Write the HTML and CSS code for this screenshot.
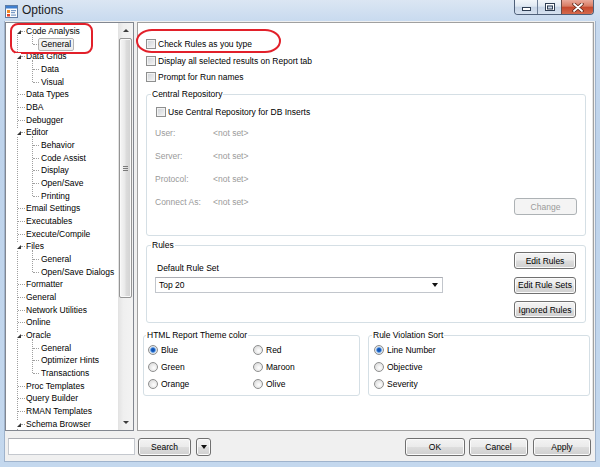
FILE: index.html
```html
<!DOCTYPE html>
<html>
<head>
<meta charset="utf-8">
<title>Options</title>
<link rel="stylesheet" href="styles.css">
</head>
<body>
<div class="window">
  <div class="titlebar">
    <svg class="appicon" width="13" height="13" viewBox="0 0 13 13">
      <rect x="0.5" y="0.5" width="12" height="12" fill="#fdfdfd" stroke="#5f7da5"/>
      <rect x="1" y="1" width="11" height="2.5" fill="#3f7fcf"/>
      <rect x="2" y="5" width="3" height="3" fill="#f08a24"/>
      <rect x="6" y="5" width="5" height="1.2" fill="#7a9cc8"/>
      <rect x="6" y="7" width="4" height="1.2" fill="#7a9cc8"/>
      <rect x="2" y="9" width="3" height="2.5" fill="#e0442a"/>
      <rect x="6" y="9.5" width="5" height="1.2" fill="#7a9cc8"/>
    </svg>
    <span class="title">Options</span>
    <div class="controls">
      <div class="cbtn min"><svg width="9" height="4" viewBox="0 0 9 4"><rect x="0.5" y="0.5" width="8" height="3" fill="#fff" stroke="#2e3d52"/></svg></div>
      <div class="cbtn max"><svg width="10" height="8" viewBox="0 0 10 8"><rect x="0.5" y="0.5" width="9" height="7" fill="none" stroke="#2e3d52"/><rect x="1.5" y="1.5" width="7" height="5" fill="none" stroke="#fff"/><rect x="2.5" y="3" width="5" height="3" fill="none" stroke="#2e3d52"/></svg></div>
      <div class="cbtn close"><svg width="12" height="9" viewBox="0 0 12 9"><path d="M2 1 L10 8 M10 1 L2 8" stroke="#5a2418" stroke-width="3.4" stroke-linecap="round"/><path d="M2 1 L10 8 M10 1 L2 8" stroke="#fff" stroke-width="1.8" stroke-linecap="round"/></svg></div>
    </div>
  </div>

  <div class="client">
    <div class="main">
      <div class="treepane">
        <div class="tree">
          <div class="row exp"><i class="tw"></i>Code Analysis</div>
          <div class="kids"><div class="row"><span class="sel">General</span></div></div>
          <div class="row exp"><i class="tw"></i>Data Grids</div>
          <div class="kids"><div class="row">Data</div><div class="row">Visual</div></div>
          <div class="row">Data Types</div>
          <div class="row">DBA</div>
          <div class="row">Debugger</div>
          <div class="row exp"><i class="tw"></i>Editor</div>
          <div class="kids"><div class="row">Behavior</div><div class="row">Code Assist</div><div class="row">Display</div><div class="row">Open/Save</div><div class="row">Printing</div></div>
          <div class="row">Email Settings</div>
          <div class="row">Executables</div>
          <div class="row">Execute/Compile</div>
          <div class="row exp"><i class="tw"></i>Files</div>
          <div class="kids"><div class="row">General</div><div class="row">Open/Save Dialogs</div></div>
          <div class="row">Formatter</div>
          <div class="row">General</div>
          <div class="row">Network Utilities</div>
          <div class="row">Online</div>
          <div class="row exp"><i class="tw"></i>Oracle</div>
          <div class="kids"><div class="row">General</div><div class="row">Optimizer Hints</div><div class="row">Transactions</div></div>
          <div class="row">Proc Templates</div>
          <div class="row">Query Builder</div>
          <div class="row">RMAN Templates</div>
          <div class="row exp"><i class="tw"></i>Schema Browser</div>
        </div>
        <div class="vscroll">
          <div class="sbtn up"><i></i></div>
          <div class="track"><div class="thumb"><i class="grip"></i></div></div>
          <div class="sbtn down"><i></i></div>
        </div>
      </div>

      <div class="content">
        <div class="chk-row"><span class="cb"></span>Check Rules as you type</div>
        <div class="chk-row"><span class="cb"></span>Display all selected results on Report tab</div>
        <div class="chk-row"><span class="cb"></span>Prompt for Run names</div>

        <div class="group central">
          <div class="legend">Central Repository</div>
          <div class="chk-row inner"><span class="cb"></span>Use Central Repository for DB Inserts</div>
          <div class="fields">
            <div class="field"><span class="lbl">User:</span><span>&lt;not set&gt;</span></div>
            <div class="field"><span class="lbl">Server:</span><span>&lt;not set&gt;</span></div>
            <div class="field"><span class="lbl">Protocol:</span><span>&lt;not set&gt;</span></div>
            <div class="field"><span class="lbl">Connect As:</span><span>&lt;not set&gt;</span><span class="btn btn-change disabled">Change</span></div>
          </div>
        </div>

        <div class="group rules">
          <div class="legend">Rules</div>
          <div class="rules-body">
            <div class="rules-left">
              <div class="rs-label">Default Rule Set</div>
              <div class="combo"><span>Top 20</span><i class="caret"></i></div>
            </div>
            <div class="rules-right">
              <span class="btn btn-rule">Edit Rules</span>
              <span class="btn btn-rule">Edit Rule Sets</span>
              <span class="btn btn-rule">Ignored Rules</span>
            </div>
          </div>
        </div>

        <div class="bottom-groups">
          <div class="group theme">
            <div class="legend">HTML Report Theme color</div>
            <div class="radios two">
              <div class="rd-row"><span class="rd on"></span>Blue</div>
              <div class="rd-row"><span class="rd"></span>Red</div>
              <div class="rd-row"><span class="rd"></span>Green</div>
              <div class="rd-row"><span class="rd"></span>Maroon</div>
              <div class="rd-row"><span class="rd"></span>Orange</div>
              <div class="rd-row"><span class="rd"></span>Olive</div>
            </div>
          </div>
          <div class="group sort">
            <div class="legend">Rule Violation Sort</div>
            <div class="radios one">
              <div class="rd-row"><span class="rd on"></span>Line Number</div>
              <div class="rd-row"><span class="rd"></span>Objective</div>
              <div class="rd-row"><span class="rd"></span>Severity</div>
            </div>
          </div>
        </div>
      </div>
    </div>

    <div class="bottombar">
      <div class="search"></div>
      <span class="btn btn-search">Search</span>
      <span class="btn btn-drop"><i class="caret"></i></span>
      <span class="btn btn-ok">OK</span>
      <span class="btn btn-cancel">Cancel</span>
      <span class="btn btn-apply">Apply</span>
    </div>
  </div>

  <div class="mark mark1"></div>
  <div class="mark mark2"></div>
</div>
</body>
</html>
```
FILE: styles.css
```css
* { box-sizing: border-box; }

body {
  margin: 0;
  font-family: "Liberation Sans", Arial, sans-serif;
  font-size: 8.5px;
  color: #000;
}

.window {
  position: relative;
  width: 600px;
  height: 467px;
  overflow: hidden;
  display: flex;
  flex-direction: column;
  background: linear-gradient(180deg, #dbe6f3 0px, #c8daef 21px, #bed3eb 140px, #c4d8ee 467px);
}

/* title bar */
.titlebar {
  height: 21px;
  flex: none;
  display: flex;
  align-items: flex-start;
}
.appicon { margin: 5px 0 0 5px; flex: none; }
.title {
  margin: 3px 0 0 4px;
  font-size: 12px;
  line-height: 15px;
  color: #1b1b1b;
}
.controls {
  margin-left: auto;
  margin-right: 6px;
  display: flex;
  height: 15px;
  border: 1px solid #4f6079;
  border-top: none;
  border-radius: 0 0 4px 4px;
  overflow: hidden;
}
.cbtn {
  height: 100%;
  display: flex;
  align-items: center;
  justify-content: center;
}
.min, .max {
  background: linear-gradient(#f2f6fa 0%, #dfe8f2 45%, #c6d4e6 50%, #d6e1ef 100%);
}
.min { width: 22px; }
.min svg { margin-top: 4px; }
.max { width: 24px; border-left: 1px solid #6c7d95; }
.close {
  width: 32px;
  border-left: 1px solid #6c4a45;
  background: linear-gradient(#eaa99a 0%, #d87b63 45%, #c5472d 50%, #d4694c 100%);
}

/* client */
.client {
  flex: 1;
  margin: 0 4px 5px 4px;
  background: #f0f0f0;
  border: 1px solid #9fb3cc;
  border-top: none;
  display: flex;
  flex-direction: column;
}
.main {
  flex: none;
  height: 410px;
  padding-top: 1px;
  display: flex;
}

/* tree */
.treepane {
  width: 129px;
  height: 409px;
  border: 1px solid #828790;
  background: #fff;
  display: flex;
  overflow: hidden;
}
.tree {
  position: relative;
  flex: 1;
  padding-top: 2px;
  overflow: hidden;
}
.tree::before {
  content: "";
  position: absolute;
  left: 11px;
  top: 8px;
  bottom: 0;
  border-left: 1px dotted #a0a0a0;
}
.row {
  position: relative;
  height: 12.68px;
  line-height: 12.68px;
  padding-left: 20px;
  white-space: nowrap;
}
.row::after {
  content: "";
  position: absolute;
  left: 12px;
  width: 7px;
  top: 6px;
  border-top: 1px dotted #a0a0a0;
}
.row.exp::after { left: 15px; width: 4px; }
.tw {
  position: absolute;
  left: 9px;
  top: 3px;
  width: 6px;
  height: 7px;
  background: #fff;
  z-index: 1;
}
.tw::after {
  content: "";
  position: absolute;
  right: 0;
  bottom: 1px;
  border-left: 4px solid transparent;
  border-bottom: 4px solid #333;
}
.kids { position: relative; }
.kids::before {
  content: "";
  position: absolute;
  left: 26px;
  top: -3px;
  bottom: 6.5px;
  border-left: 1px dotted #a0a0a0;
}
.kids .row { padding-left: 35px; }
.kids .row::after { left: 27px; width: 6px; }
.sel {
  display: inline-block;
  vertical-align: top;
  margin-top: 0.5px;
  margin-left: -3px;
  height: 12.5px;
  line-height: 10.5px;
  padding: 0 2px;
  border: 1px solid #b4b4b4;
  border-radius: 2px;
  background: linear-gradient(#f7f7f7, #ececec);
}

/* scrollbar */
.vscroll {
  width: 15px;
  flex: none;
  display: flex;
  flex-direction: column;
  background: linear-gradient(90deg, #e2e2e2, #efefef 35%, #f3f3f3);
}
.sbtn {
  height: 15px;
  flex: none;
  display: flex;
  align-items: center;
  justify-content: center;
}
.sbtn i { width: 0; height: 0; border-left: 3px solid transparent; border-right: 3px solid transparent; }
.sbtn.up i { border-bottom: 3px solid #3c3c3c; }
.sbtn.down i { border-top: 3px solid #3c3c3c; }
.track { flex: 1; padding: 0 1px; }
.thumb {
  height: 260px;
  border: 1px solid #959595;
  border-radius: 2px;
  background: linear-gradient(90deg, #f6f6f6, #e9e9e9 45%, #dcdcdc 55%, #d2d2d2);
  box-shadow: inset 0 0 0 1px #f9f9f9;
  display: flex;
  align-items: center;
  justify-content: center;
}
.grip {
  width: 5px;
  height: 5px;
  background: repeating-linear-gradient(#7a7a7a 0 1px, transparent 1px 2px);
}

/* right content */
.content {
  width: 457px;
  height: 409px;
  margin-left: 3px;
  border: 1px solid #a0a0a0;
  box-shadow: inset -1px 0 #e6e6e6;
  background: #fff;
  padding-top: 13px;
  display: flex;
  flex-direction: column;
}
.chk-row {
  height: 16.5px;
  margin-left: 8px;
  display: flex;
  align-items: center;
  white-space: nowrap;
}
.cb {
  width: 10px;
  height: 10px;
  flex: none;
  margin-right: 2px;
  border: 1px solid #8e8f8f;
  background: linear-gradient(135deg, #cdd1d6, #f6f6f6);
  box-shadow: inset 0 0 0 1px #f2f2f2;
}

.group {
  border: 1px solid #d5dfe5;
  border-radius: 3px;
  display: flex;
  flex-direction: column;
}
.legend {
  align-self: flex-start;
  height: 12px;
  line-height: 12px;
  margin: -7px 0 0 4px;
  padding: 0 1px;
  background: #fff;
  white-space: nowrap;
}

.central {
  height: 142px;
  margin: 8.5px 7px 0 8px;
}
.chk-row.inner { height: 16px; margin: 4px 0 0 9px; }
.fields { margin-top: 1.5px; }
.field {
  height: 23px;
  display: flex;
  align-items: center;
  padding-left: 8px;
  color: #9a9a9a;
}
.lbl { width: 58px; flex: none; }

.btn {
  display: flex;
  align-items: center;
  justify-content: center;
  height: 17px;
  border: 1px solid #707070;
  border-radius: 3px;
  background: linear-gradient(#f3f3f3 0%, #ebebeb 48%, #dddddd 52%, #cfcfcf 100%);
  box-shadow: inset 0 0 0 1px #fbfbfb;
  color: #000;
  white-space: nowrap;
  flex: none;
}
.btn.disabled {
  border-color: #adb2b5;
  background: #f4f4f4;
  box-shadow: none;
  color: #9a9a9a;
}
.btn-change {
  width: 63px;
  margin-left: auto;
  margin-right: 8px;
  align-self: flex-start;
  margin-top: 7.5px;
}

.rules {
  height: 78px;
  margin: 9px 7px 0 8px;
}
.rules-body { flex: 1; display: flex; }
.rules-left { flex: 1; padding-left: 8px; }
.rs-label { margin-top: 11px; height: 12px; line-height: 12px; padding-left: 2px; }
.combo {
  margin-top: 3px;
  width: 288px;
  height: 16px;
  border: 1px solid #c2c6cc;
  border-top-color: #abadb3;
  background: #fff;
  display: flex;
  align-items: center;
  padding: 0 4px 0 3px;
}
.combo span { flex: 1; }
.caret {
  width: 0;
  height: 0;
  border-left: 3.5px solid transparent;
  border-right: 3.5px solid transparent;
  border-top: 4px solid #111;
}
.rules-right {
  display: flex;
  flex-direction: column;
  gap: 7.5px;
  padding-top: 1px;
  margin-right: 9px;
}
.btn-rule { width: 62px; }

.bottom-groups {
  display: flex;
  gap: 8px;
  margin: 12px 3px 0 5px;
}
.theme { width: 217px; height: 61px; }
.sort { flex: 1; height: 61px; }
.theme .legend { margin-left: 2px; }
.sort .legend { margin-left: 3px; }
.radios { padding-top: 0.5px; display: grid; grid-auto-rows: 17px; }
.radios.two { grid-template-columns: 105px auto; padding-left: 4px; }
.radios.one { padding-left: 5px; }
.rd-row { display: flex; align-items: center; white-space: nowrap; }
.rd {
  width: 10px;
  height: 10px;
  flex: none;
  margin-right: 3px;
  border: 1px solid #8e8f8f;
  border-radius: 50%;
  background: radial-gradient(circle at 60% 60%, #ffffff 0, #e6e6e6 55%, #cfcfcf 100%);
}
.rd.on {
  background: radial-gradient(circle, #0d4aa6 0, #1d63c4 1.8px, #7fb0ea 2.6px, #d9e6f4 3.2px, #e2e2e2 3.8px, #cdcdcd 5px);
}

/* bottom bar */
.bottombar {
  flex: 1;
  display: flex;
  align-items: flex-start;
  padding: 7px 4px 0 3px;
}
.search {
  width: 127px;
  height: 17px;
  border: 1px solid #c4c8ce;
  border-top-color: #abadb3;
  background: #fff;
}
.bottombar .btn { height: 18px; }
.btn-search { width: 53px; margin-left: 3px; }
.btn-drop { width: 15px; margin-left: 5px; }
.btn-ok { width: 60px; margin-left: auto; }
.btn-cancel { width: 59px; margin-left: 4px; }
.btn-apply { width: 58px; margin-left: 5px; }

/* red annotation marks */
.mark {
  position: absolute;
  border: 2px solid #e2202a;
}
.mark1 {
  left: 10px;
  top: 23px;
  width: 83px;
  height: 31px;
  border-radius: 8px;
}
.mark2 {
  left: 136px;
  top: 29px;
  width: 145px;
  height: 24px;
  border-radius: 16px / 12px;
}
```
